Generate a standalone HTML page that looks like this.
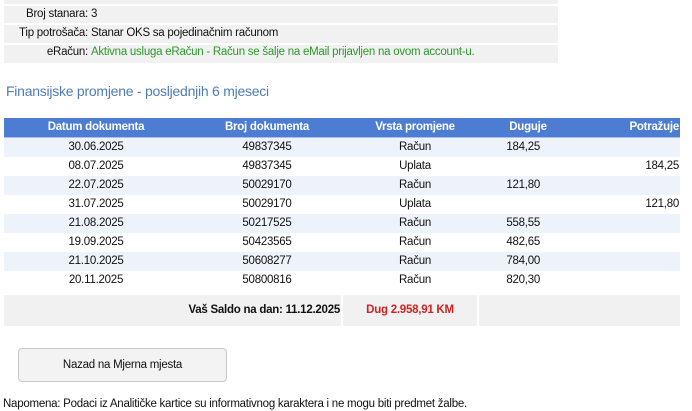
<!DOCTYPE html>
<html><head><meta charset="utf-8"><style>
*{margin:0;padding:0;box-sizing:border-box}
body{width:692px;height:411px;background:#fff;font-family:"Liberation Sans",sans-serif;font-size:11.5px;color:#111;position:relative;overflow:hidden;letter-spacing:-0.25px}
.a{position:absolute}
.g{background:#f1f1f1}
.lbl{position:absolute;right:604px;text-align:right;white-space:nowrap}
.val{position:absolute;left:91px;white-space:nowrap}
.r{position:absolute;left:4px;width:676px;height:19px;line-height:19px}
.r span{position:absolute;white-space:nowrap}
.c1{left:0;width:184px;text-align:center}
.c2{left:184px;width:158px;text-align:center}
.c3{left:338px;width:146px;text-align:center}
.c4{left:476px;width:60px;text-align:right}
.c5{left:600px;width:75px;text-align:right}
.hd{background:#4c7dd2;color:#fff;font-weight:bold;border-bottom:1px solid #a8c0ea}
.hd .c4{left:476px;width:96px;text-align:center}
.hd .c5{text-align:right}
.alt{background:#eef2fa}
</style></head><body>
<div class="a g" style="left:4px;top:0;width:554px;height:4px"></div>
<div class="a g" style="left:4px;top:6px;width:554px;height:17px"></div>
<div class="a g" style="left:4px;top:25px;width:554px;height:18px"></div>
<div class="a g" style="left:4px;top:45px;width:554px;height:18px"></div>
<div class="lbl" style="top:8px">Broj stanara:</div><div class="val" style="top:8px">3</div>
<div class="lbl" style="top:27px">Tip potrošača:</div><div class="val" style="top:27px">Stanar OKS sa pojedinačnim računom</div>
<div class="lbl" style="top:46px">eRačun:</div><div class="val" style="top:46px;color:#2a9a2a">Aktivna usluga eRačun - Račun se šalje na eMail prijavljen na ovom account-u.</div>
<div class="a" style="left:6px;top:83px;font-size:14px;color:#4e7db5">Finansijske promjene - posljednjih 6 mjeseci</div>
<div class="a" style="left:660px;top:-30px;width:80px;height:80px;border-radius:50%;border:6px solid #d5e3f7;border-left-color:transparent;border-bottom-color:transparent"></div>
<div class="r hd" style="top:118px;height:20px"><span class="c1">Datum dokumenta</span><span class="c2">Broj dokumenta</span><span class="c3">Vrsta promjene</span><span class="c4">Duguje</span><span class="c5">Potražuje</span></div>
<div class="r alt" style="top:138px"><span class="c1">30.06.2025</span><span class="c2">49837345</span><span class="c3">Račun</span><span class="c4">184,25</span></div>
<div class="r" style="top:157px"><span class="c1">08.07.2025</span><span class="c2">49837345</span><span class="c3">Uplata</span><span class="c5">184,25</span></div>
<div class="r alt" style="top:176px"><span class="c1">22.07.2025</span><span class="c2">50029170</span><span class="c3">Račun</span><span class="c4">121,80</span></div>
<div class="r" style="top:195px"><span class="c1">31.07.2025</span><span class="c2">50029170</span><span class="c3">Uplata</span><span class="c5">121,80</span></div>
<div class="r alt" style="top:214px"><span class="c1">21.08.2025</span><span class="c2">50217525</span><span class="c3">Račun</span><span class="c4">558,55</span></div>
<div class="r" style="top:233px"><span class="c1">19.09.2025</span><span class="c2">50423565</span><span class="c3">Račun</span><span class="c4">482,65</span></div>
<div class="r alt" style="top:252px"><span class="c1">21.10.2025</span><span class="c2">50608277</span><span class="c3">Račun</span><span class="c4">784,00</span></div>
<div class="r" style="top:271px"><span class="c1">20.11.2025</span><span class="c2">50800816</span><span class="c3">Račun</span><span class="c4">820,30</span></div>
<div class="a g" style="left:4px;top:295px;width:337px;height:31px"></div>
<div class="a g" style="left:343px;top:295px;width:134px;height:31px"></div>
<div class="a g" style="left:479px;top:295px;width:201px;height:31px"></div>
<div class="a" style="left:4px;top:304px;width:336px;text-align:right;font-weight:bold">Vaš Saldo na dan: 11.12.2025</div>
<div class="a" style="left:343px;top:304px;width:134px;text-align:center;font-weight:bold;color:#d42020">Dug 2.958,91 KM</div>
<div class="a" style="left:18px;top:348px;width:209px;height:34px;border:1px solid #c8c8c8;border-radius:4px;background:#f3f3f3;text-align:center;line-height:32px">Nazad na Mjerna mjesta</div>
<div class="a" style="left:3px;top:398px">Napomena: Podaci iz Analitičke kartice su informativnog karaktera i ne mogu biti predmet žalbe.</div>
</body></html>
